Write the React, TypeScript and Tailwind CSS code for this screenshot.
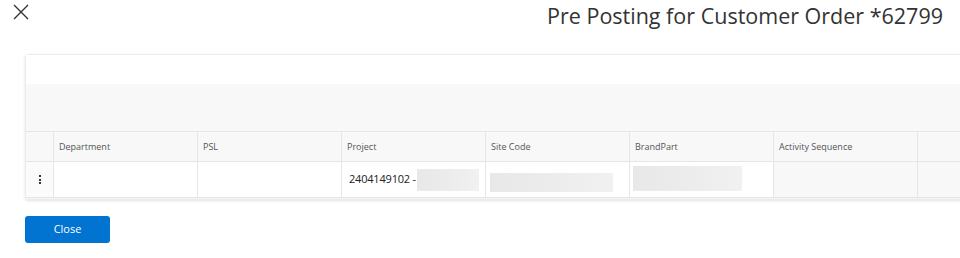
const columns = ["Department", "PSL", "Project", "Site Code", "BrandPart", "Activity Sequence", ""];

function Skeleton({ className }: { className: string }) {
  return <div className={`shrink-0 bg-gradient-to-r from-[#e8e8e8] via-[#ececec] to-[#f1f1f1] ${className}`} />;
}

export default function App() {
  return (
    <div className="w-[960px] h-[258px] overflow-hidden bg-white font-['Open_Sans',sans-serif] text-[#333]">
      <div className="flex h-[54px] items-start justify-between">
        <button className="ml-[13px] mt-[4px] text-[#333]">
          <svg width="16" height="16" viewBox="0 0 16 16" className="block">
            <path d="M1 1 L15 15 M15 1 L1 15" stroke="#333" strokeWidth="1.4" fill="none" />
          </svg>
        </button>
        <h1 className="mr-[17px] mt-[0px] text-[21.5px] leading-[32px] text-[#333]">
          Pre Posting for Customer Order *62799
        </h1>
      </div>

      <section className="ml-[25px] w-[980px] rounded-[3px] border border-[#ececec] shadow-[0_1px_3px_rgba(0,0,0,0.12)]">
        <div className="h-[29px] bg-white" />
        <div className="h-[47px] bg-[#f8f8f8]" />
        <div className="grid grid-cols-[28px_144px_144px_144px_144px_144px_144px_1fr] border-t border-[#e6e6e6] bg-[#f8f8f8]">
          <div className="h-[29px] border-r border-[#e6e6e6]" />
          {columns.map((c, i) => (
            <div
              key={i}
              className="flex h-[29px] items-center border-r border-[#e6e6e6] pl-[5px] text-[9px] text-[#555]"
            >
              {c}
            </div>
          ))}
        </div>
        <div className="grid grid-cols-[28px_144px_144px_144px_144px_144px_144px_1fr] border-t border-b border-[#e6e6e6]">
          <div className="flex h-[35px] items-center justify-center border-r border-[#e6e6e6] bg-[#fbfbfb]">
            <span className="flex flex-col gap-[1.5px]">
              <span className="h-[2px] w-[2px] bg-[#333]" />
              <span className="h-[2px] w-[2px] bg-[#333]" />
              <span className="h-[2px] w-[2px] bg-[#333]" />
            </span>
          </div>
          <div className="h-[35px] border-r border-[#e6e6e6] bg-white" />
          <div className="h-[35px] border-r border-[#e6e6e6] bg-white" />
          <div className="flex h-[35px] items-center gap-[1px] whitespace-nowrap border-r border-[#e6e6e6] bg-white pl-[7px] text-[11px] tracking-[-0.2px] text-[#222]">
            <span>2404149102 -</span>
            <Skeleton className="h-[22px] w-[62px]" />
          </div>
          <div className="flex h-[35px] items-center border-r border-[#e6e6e6] bg-white pl-[4px] pt-[5px]">
            <Skeleton className="h-[19px] w-[123px]" />
          </div>
          <div className="flex h-[35px] items-center border-r border-[#e6e6e6] bg-white pl-[3px] pb-[2px]">
            <Skeleton className="h-[25px] w-[109px]" />
          </div>
          <div className="h-[35px] border-r border-[#e6e6e6] bg-[#f8f8f8]" />
          <div className="h-[35px] bg-[#f8f8f8]" />
        </div>
        <div className="h-[1px] bg-[#f4f4f4]" />
      </section>

      <button className="ml-[25px] mt-[16px] h-[27px] w-[85px] rounded-[3px] bg-[#0074d0] text-[11px] text-white">
        Close
      </button>
    </div>
  );
}
